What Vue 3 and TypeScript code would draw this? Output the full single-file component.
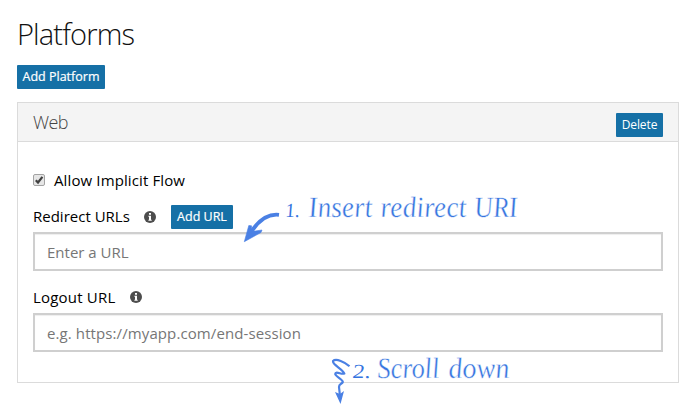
<script setup lang="ts">
import { ref } from 'vue'

interface Word {
  text: string
  x: number
  y: number
  width: number
  digit?: boolean
}

const implicitFlow = ref(true)
const redirectUrl = ref('')
const logoutUrl = ref('')

const words: Word[] = [
  { text: '1.', x: 286, y: 217, width: 14, digit: true },
  { text: 'Insert', x: 309, y: 217, width: 64 },
  { text: 'redirect', x: 381, y: 217, width: 86 },
  { text: 'URI', x: 475, y: 217, width: 43 },
  { text: '2.', x: 353, y: 378, width: 18, digit: true },
  { text: 'Scroll', x: 378, y: 378, width: 62 },
  { text: 'down', x: 449, y: 378, width: 61 },
]
</script>

<template>
  <main class="page">
    <h1>Platforms</h1>
    <button class="btn add-platform">Add Platform</button>
    <section class="card">
      <header class="card-head">
        <h2>Web</h2>
        <button class="btn delete">Delete</button>
      </header>
      <div class="card-body">
        <label class="check-row">
          <input v-model="implicitFlow" type="checkbox" class="native" />
          <svg class="box" viewBox="0 0 12 12">
            <rect x=".5" y=".5" width="11" height="11" rx="1.5" fill="#e6e6e6" stroke="#a3a3a3" />
            <path v-if="implicitFlow" d="M2.8 6.2L5 8.5L9.4 2.8" fill="none" stroke="#404040" stroke-width="2.2" />
          </svg>
          <span class="allow">Allow Implicit Flow</span>
        </label>
        <div class="label-row redirect">
          <span class="label l1">Redirect URLs</span>
          <svg class="info" viewBox="0 0 12 12">
            <circle cx="6" cy="6" r="6" fill="#4d4d4d" />
            <path d="M5 2h2v1.7H5zM4.4 4.8H7v4h.7v.9H4.4v-.9H5V5.7h-.6z" fill="#fff" />
          </svg>
          <button class="btn add-url">Add URL</button>
        </div>
        <input v-model="redirectUrl" class="field" placeholder="Enter a URL" />
        <div class="label-row logout">
          <span class="label l2">Logout URL</span>
          <svg class="info" viewBox="0 0 12 12">
            <circle cx="6" cy="6" r="6" fill="#4d4d4d" />
            <path d="M5 2h2v1.7H5zM4.4 4.8H7v4h.7v.9H4.4v-.9H5V5.7h-.6z" fill="#fff" />
          </svg>
        </div>
        <input v-model="logoutUrl" class="field wide" placeholder="e.g. https://myapp.com/end-session" />
      </div>
    </section>
    <svg class="notes" viewBox="0 0 698 405">
      <path d="M279 214.800C268 213.500 258 221 250.500 233" fill="none" stroke="#4a80e4" stroke-width="3.800" />
      <path d="M244.300 241.700L248.800 225.500L251.500 225.800L251.500 231.500L262 230L261 232.500Z" fill="#4a80e4" stroke="#4a80e4" stroke-width=".6" />
      <path d="M349.500 366.300C345 362 336 358 333 361C332 364.500 342.500 369 344.200 373.500C342 375 335.500 370.500 335.200 374C336 377 343 379.500 342.800 382C342 384 338.800 384 339 387L340 396" fill="none" stroke="#4a80e4" stroke-width="2.200" />
      <path d="M335 392L340 394L344 391L340.500 404Z" fill="#4a80e4" />
      <text
        v-for="word in words"
        :key="word.text"
        :class="{ digit: word.digit }"
        :transform="`translate(${word.x} ${word.y}) skewX(5)`"
        :textLength="word.width"
        lengthAdjust="spacingAndGlyphs"
      >{{ word.text }}</text>
    </svg>
  </main>
</template>

<style>
body { background: #fff; overflow: hidden; }
</style>

<style scoped>
.page {
  position: relative;
  box-sizing: border-box;
  width: 698px;
  height: 405px;
  padding: 14px 19px 0 17px;
  font-family: "Open Sans", "Noto Sans", sans-serif;
  color: #000;
}
h1, h2 { margin: 0; font-weight: 300; white-space: nowrap; }
h1 { height: 51px; font-size: 29px; line-height: 39px; letter-spacing: -.85px; color: #111; }
.btn {
  display: flex;
  align-items: center;
  justify-content: center;
  box-sizing: border-box;
  height: 24px;
  padding: 0;
  border: 0;
  border-radius: 1px;
  background: #1570a6;
  color: #fff;
  font: 12px/24px "Open Sans", sans-serif;
  white-space: nowrap;
}
.add-platform { width: 88px; font-size: 12.5px; -webkit-text-stroke: .2px #fff; }
.delete { width: 47px; letter-spacing: -.1px; }
.add-url { width: 62px; margin-left: 15px; font-size: 12.5px; -webkit-text-stroke: .2px #fff; }
.card {
  box-sizing: border-box;
  height: 281px;
  margin-top: 13px;
  border: 1px solid #dbdbdb;
}
.card-head {
  display: flex;
  align-items: center;
  justify-content: space-between;
  box-sizing: border-box;
  height: 39px;
  padding: 5px 15px 0;
  border-bottom: 1px solid #dbdbdb;
  background: #f4f4f4;
}
h2 { font-size: 18px; line-height: 24px; margin-top: -5px; letter-spacing: -.6px; color: #444; }
.card-body { display: flex; flex-direction: column; padding: 28px 15px 0; }
.check-row { display: flex; align-items: center; height: 20px; font-size: 15px; }
.allow { letter-spacing: .12px; }
.native { position: absolute; opacity: 0; }
.box { width: 12px; height: 12px; margin-right: 9px; }
.label-row { display: flex; align-items: center; font-size: 15px; white-space: nowrap; }
.redirect { height: 24px; margin-top: 15px; }
.logout { height: 24px; margin-top: 15px; }
.label { display: block; line-height: 20px; margin-top: -2px; }
.l1 { width: 111px; }
.l2 { width: 97px; letter-spacing: .2px; }
.info { width: 12px; height: 12px; margin-top: -1px; }
.logout .info { margin-top: -2px; }
.field {
  box-sizing: border-box;
  width: 630px;
  height: 39px;
  margin: 3px 0 0;
  padding: 0 12px;
  border: 2px solid #cfcfcf;
  border-radius: 0;
  outline: 0;
  background: #fff;
  box-shadow: inset 0 1px 1px #eee;
  font: 15px "Open Sans", sans-serif;
}
.wide { letter-spacing: .1px; }
.field::placeholder { color: #767676; opacity: 1; }
.notes { position: absolute; left: 0; top: 0; width: 698px; height: 405px; pointer-events: none; }
.notes text { font: italic 29.5px "Liberation Serif", serif; fill: #3574e0; stroke: #fff; stroke-width: .4px; }
.notes .digit { font-size: 20px; stroke: none; }
</style>
